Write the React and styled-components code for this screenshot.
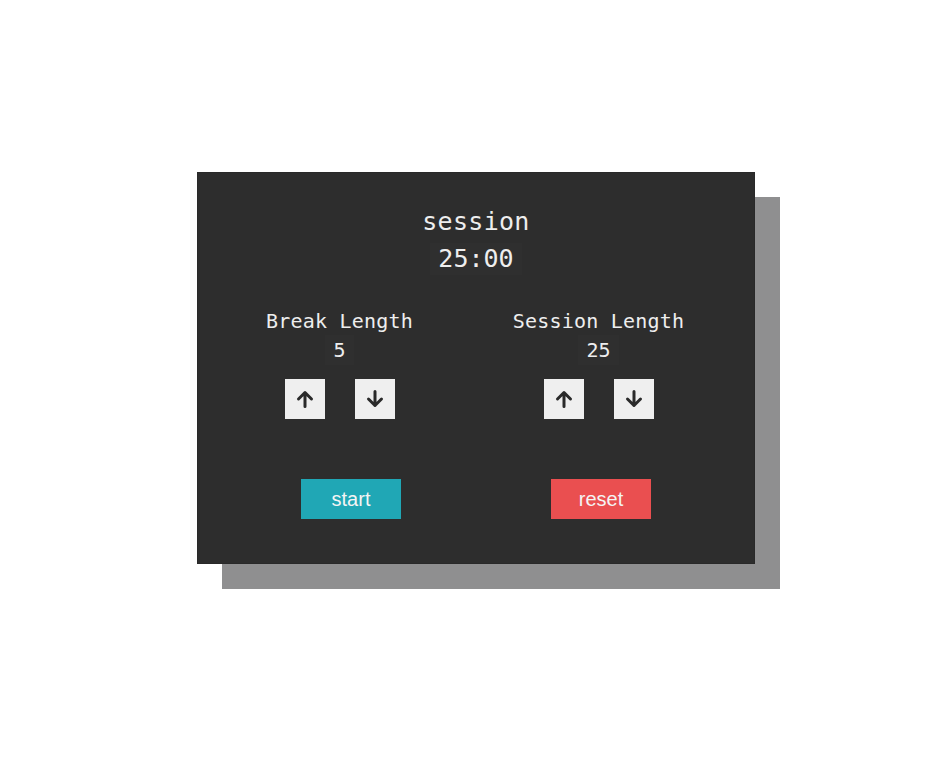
import React, { useState } from "react";
import styled, { createGlobalStyle } from "styled-components";

const GlobalStyle = createGlobalStyle`
  body {
    margin: 0;
    background: #ffffff;
    font-family: "DejaVu Sans Mono", "Liberation Mono", monospace;
  }
`;

const Page = styled.div`
  width: 946px;
  height: 781px;
  display: flex;
  justify-content: center;
  padding-top: 172px;
  box-sizing: border-box;
`;

const Card = styled.div`
  width: 558px;
  height: 392px;
  margin-left: 6px;
  box-sizing: border-box;
  background: #2d2d2d;
  box-shadow: 25px 25px 0 #8f8f90, inset 0 0 0 1px #292929;
  color: #eeeeee;
  display: flex;
  flex-direction: column;
  align-items: stretch;
  padding-top: 35px;
`;

const Title = styled.div`
  text-align: center;
  font-size: 25px;
  line-height: 30px;
  letter-spacing: 0.3px;
`;

const Clock = styled.div`
  align-self: center;
  font-size: 25px;
  line-height: 32px;
  padding: 0 8px;
  margin-top: 6px;
  background: #2f2f2f;
`;

const Settings = styled.div`
  display: grid;
  grid-template-columns: 1fr 1fr;
  padding: 0 27px 0 13px;
  margin-top: 33px;
`;

const Column = styled.div`
  display: flex;
  flex-direction: column;
  align-items: center;
`;

const Label = styled.div`
  font-size: 20px;
  line-height: 26px;
  letter-spacing: 0.2px;
`;

const Value = styled.div`
  font-size: 20px;
  line-height: 30px;
  padding: 0 8px;
  margin-top: 1px;
  background: #2f2f2f;
`;

const Arrows = styled.div`
  display: flex;
  gap: 30px;
  margin-top: 14px;
`;

const ArrowButton = styled.button`
  width: 40px;
  height: 40px;
  border: none;
  padding: 0;
  background: #efefef;
  display: flex;
  align-items: center;
  justify-content: center;
  cursor: pointer;
`;

const Controls = styled.div`
  display: grid;
  grid-template-columns: 1fr 1fr;
  padding: 0 29px;
  margin-top: 60px;
`;

const ControlCell = styled.div`
  display: flex;
  justify-content: center;
`;

const ActionButton = styled.button`
  width: 100px;
  height: 40px;
  border: none;
  background: ${(p) => p.color};
  color: #f4f4f4;
  font-family: "Liberation Sans", Arial, sans-serif;
  font-size: 20px;
  cursor: pointer;
`;

function Arrow({ down }) {
  return (
    <svg
      width="20"
      height="20"
      viewBox="0 0 20 20"
      style={{ transform: down ? "rotate(180deg)" : "none" }}
    >
      <path
        d="M10 17.5V3.5M3.5 10L10 3.5L16.5 10"
        fill="none"
        stroke="#2a2a2a"
        strokeWidth="3"
        strokeLinecap="round"
        strokeLinejoin="round"
      />
    </svg>
  );
}

function LengthControl({ label, value, onChange }) {
  return (
    <Column>
      <Label>{label}</Label>
      <Value>{value}</Value>
      <Arrows>
        <ArrowButton onClick={() => onChange(Math.min(60, value + 1))}>
          <Arrow />
        </ArrowButton>
        <ArrowButton onClick={() => onChange(Math.max(1, value - 1))}>
          <Arrow down />
        </ArrowButton>
      </Arrows>
    </Column>
  );
}

export default function App() {
  const [breakLen, setBreakLen] = useState(5);
  const [sessionLen, setSessionLen] = useState(25);

  return (
    <>
      <GlobalStyle />
      <Page>
        <Card>
          <Title>session</Title>
          <Clock>{String(sessionLen).padStart(2, "0")}:00</Clock>
          <Settings>
            <LengthControl label="Break Length" value={breakLen} onChange={setBreakLen} />
            <LengthControl label="Session Length" value={sessionLen} onChange={setSessionLen} />
          </Settings>
          <Controls>
            <ControlCell>
              <ActionButton color="#20a7b5">start</ActionButton>
            </ControlCell>
            <ControlCell>
              <ActionButton color="#ea4f50">reset</ActionButton>
            </ControlCell>
          </Controls>
        </Card>
      </Page>
    </>
  );
}
